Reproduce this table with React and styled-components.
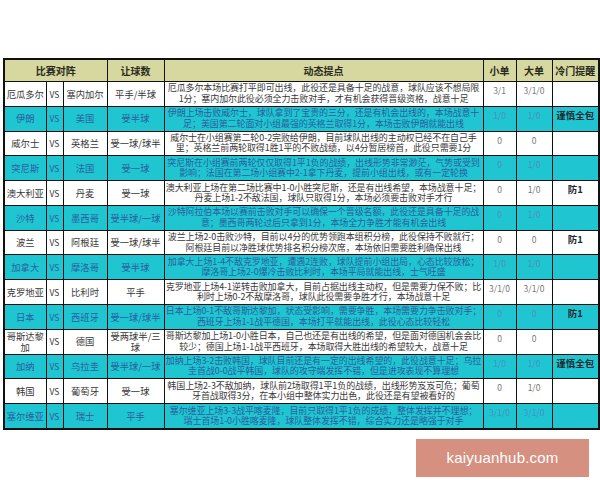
import React from "react";
import styled, { createGlobalStyle } from "styled-components";

const GlobalStyle = createGlobalStyle`
  html, body {
    margin: 0;
    padding: 0;
    background: #fff;
  }
  body {
    font-family: "Noto Sans CJK SC", "Noto Sans", sans-serif;
  }
`;

const rows = [
  ["厄瓜多尔", "塞内加尔", "平手/半球", "厄瓜多尔本场比赛打平即可出线，此役还是具备十足的战意，球队应该不想局限1分；塞内加尔此役必须全力击败对手，才有机会获得晋级资格，战意十足", "3/1", "3/1/0", ""],
  ["伊朗", "美国", "受半球", "伊朗上场击败威尔士，球队拿到了宝贵的三分，还是有机会出线的，本场战意十足；美国第二轮面对小组最强的英格兰取得1分，本场击败伊朗就能出线", "1/0", "1/0", "谨慎全包"],
  ["威尔士", "英格兰", "受一球/球半", "威尔士在小组赛第二轮0-2完败给伊朗，目前球队出线的主动权已经不在自己手里；英格兰前两轮取得1胜1平的不败战绩，以4分暂居榜首，此役只需要1分", "0", "0", ""],
  ["突尼斯", "法国", "受一球", "突尼斯在小组赛前两轮仅仅取得1平1负的战绩，出线形势非常渺茫，气势或受到影响；法国在第二场小组赛中2-1拿下丹麦，提前小组出线，或有一定轮换", "0", "1/0", ""],
  ["澳大利亚", "丹麦", "受一球", "澳大利亚上场在第二场比赛中1-0小胜突尼斯，还是有出线希望，本场战意十足；丹麦上场1-2不敌法国，球队只取得1分，本场必须要击败对手才行", "0", "1/0", "防1"],
  ["沙特", "墨西哥", "受半球/一球", "沙特阿拉伯本场以赛前击败对手可以确保一个晋级名额，此役还是具备十足的战意；墨西哥两轮过后只拿到1分，本场全力争胜才能有机会出线", "0", "1/0", ""],
  ["波兰", "阿根廷", "受一球/球半", "波兰上场2-0击败沙特，目前以4分的优势领跑本组积分榜，此役保持不败就行；阿根廷目前以净胜球优势排名积分榜次席，本场依旧需要胜利确保出线", "0", "0", "防1"],
  ["加拿大", "摩洛哥", "受半球", "加拿大上场1-4不敌克罗地亚，遭遇2连败，球队提前小组出局，心态比较放松；摩洛哥上场2-0爆冷击败比利时，本场平局就能出线，士气旺盛", "1/0", "1/0", ""],
  ["克罗地亚", "比利时", "平手", "克罗地亚上场4-1逆转击败加拿大，目前占据出线主动权，但是需要力保不败；比利时上场0-2不敌摩洛哥，球队此役需要争胜才行，本场战意十足", "3/1/0", "3/1/0", ""],
  ["日本", "西班牙", "受一球/球半", "日本上场0-1不敌哥斯达黎加，状态受影响，需要争胜，本场需要力争击败对手；西班牙上场1-1战平德国，本场打平就能出线，此役心态比较轻松", "0", "0", "防1"],
  ["哥斯达黎加", "德国", "受两球半/三球", "哥斯达黎加上场1-0小胜日本，自己也还是有出线的希望，但是面对德国机会会比较少；德国上场1-1战平西班牙，本场取得大胜出线的希望较大，战意十足", "0", "0", ""],
  ["加纳", "乌拉圭", "受半球/一球", "加纳上场3-2击败韩国，球队目前还是有一定的出线希望的，此役战意十足；乌拉圭首战0-0战平韩国，球队的攻守端发挥不错，但是进攻表现不算理想", "1/0", "1/0", "谨慎全包"],
  ["韩国", "葡萄牙", "受一球", "韩国上场2-3不敌加纳，球队前2场取得1平1负的战绩，出线形势岌岌可危；葡萄牙首战取得3分，在本小组中整体实力出色，此役还是有望被看好的", "0", "1/0", ""],
  ["塞尔维亚", "瑞士", "平手", "塞尔维亚上场3-3战平喀麦隆，目前只取得1平1负的成绩，整体发挥并不理想；瑞士首场1-0小胜喀麦隆，球队整体发挥不错，综合实力还是略强于对手", "3/1/0", "3/1/0", ""],
];

const widths = [42, 17, 44, 57, 319, 33, 36, 47];

const Page = styled.div`
  width: 600px;
  height: 480px;
  padding: 58px 2px 0 3px;
  box-sizing: border-box;
  display: flex;
  flex-direction: column;
  overflow: hidden;
`;

const Table = styled.table`
  width: 595px;
  flex-shrink: 0;
  border-collapse: collapse;
  table-layout: fixed;
  border: 2px solid #111;
`;

const HeadRow = styled.tr`
  background: #d6d8a0;
`;

const Th = styled.th`
  border: 1.5px solid #111;
  font-size: 10px;
  line-height: 12px;
  font-weight: 700;
  color: #2a2a1c;
  padding: 5px 0 4px;
`;

const Row = styled.tr`
  background: ${({ $cyan }) => ($cyan ? "#1fc6d2" : "#fff")};
  color: ${({ $cyan }) => ($cyan ? "#2b5e9c" : "#383838")};
`;

const Td = styled.td`
  border: 1.5px solid #111;
  padding: 0 1px;
  text-align: center;
  font-size: ${({ $small }) => ($small ? "8.5px" : "9.3px")};
  line-height: 10.5px;
  word-break: break-all;
`;

const Note = styled(Td)`
  font-size: 9px;
  line-height: 10.5px;
  letter-spacing: -0.1px;
  padding: 1.4px 1px;
`;

const Num = styled(Td)`
  color: ${({ $cyan }) => ($cyan ? "#4c8ec2" : "#777")};
  font-size: 8.5px;
  vertical-align: top;
  padding-top: 3px;
`;

const Tip = styled(Td)`
  font-weight: 700;
  color: #1e2a30;
  font-size: 9.5px;
  vertical-align: top;
  padding-top: 3px;
`;

const Footer = styled.div`
  display: flex;
  justify-content: flex-end;
  padding: 9px 9px 0 0;
`;

const Watermark = styled.div`
  width: 173px;
  height: 38px;
  background: #d5907f;
  color: #fff;
  display: flex;
  align-items: center;
  justify-content: center;
  font-family: "Liberation Sans", Arial, sans-serif;
  font-size: 15px;
  letter-spacing: 0.2px;
`;

export default function App() {
  return (
    <>
      <GlobalStyle />
      <Page>
        <Table>
          <colgroup>
            {widths.map((w, i) => (
              <col key={i} style={{ width: w }} />
            ))}
          </colgroup>
          <thead>
            <HeadRow>
              <Th colSpan={3}>比赛对阵</Th>
              <Th>让球数</Th>
              <Th>动态提点</Th>
              <Th>小单</Th>
              <Th>大单</Th>
              <Th>冷门提醒</Th>
            </HeadRow>
          </thead>
          <tbody>
            {rows.map((r, i) => {
              const cyan = i % 2 === 1;
              return (
                <Row key={i} $cyan={cyan}>
                  <Td>{r[0]}</Td>
                  <Td $small>VS</Td>
                  <Td>{r[1]}</Td>
                  <Td>{r[2]}</Td>
                  <Note>{r[3]}</Note>
                  <Num $cyan={cyan}>{r[4]}</Num>
                  <Num $cyan={cyan}>{r[5]}</Num>
                  <Tip>{r[6]}</Tip>
                </Row>
              );
            })}
          </tbody>
        </Table>
        <Footer>
          <Watermark>kaiyuanhub.com</Watermark>
        </Footer>
      </Page>
    </>
  );
}
